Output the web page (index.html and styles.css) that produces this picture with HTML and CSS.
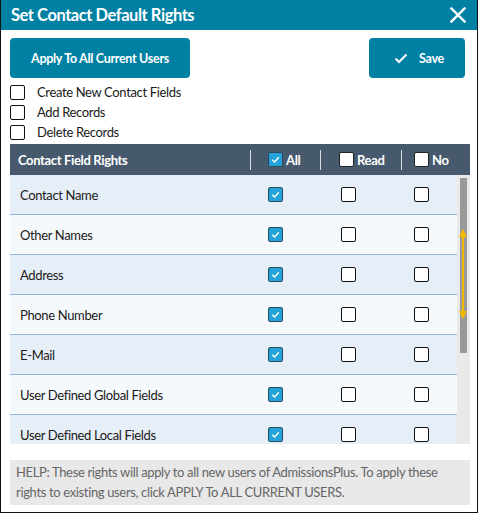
FILE: index.html
```html
<!DOCTYPE html>
<html>
<head>
<meta charset="utf-8">
<link rel="stylesheet" href="styles.css">
</head>
<body>
<div class="dialog">
  <div class="titlebar">
    <span class="title">Set Contact Default Rights</span>
    <svg class="close" width="16" height="16" viewBox="0 0 16 16"><path d="M1.5 1.5 L14.5 14.5 M14.5 1.5 L1.5 14.5" stroke="#fff" stroke-width="2.4" stroke-linecap="square"/></svg>
  </div>
  <div class="content">
    <div class="actions">
      <button class="btn apply">Apply To All Current Users</button>
      <button class="btn save"><svg width="14" height="11" viewBox="0 0 14 11"><path d="M1.5 5.5 L5 9 L12.5 1.5" stroke="#fff" stroke-width="2" fill="none"/></svg><span>Save</span></button>
    </div>
    <div class="opts">
      <label class="opt"><span class="cb"></span>Create New Contact Fields</label>
      <label class="opt"><span class="cb"></span>Add Records</label>
      <label class="opt"><span class="cb"></span>Delete Records</label>
    </div>
    <div class="table">
      <div class="thead">
        <div class="th name">Contact Field Rights</div>
        <div class="sep"></div>
        <div class="th col"><span class="cb checked"><svg viewBox="0 0 10 10"><path d="M2 5.2 L4.2 7.2 L8 3" stroke="#fff" stroke-width="1.3" fill="none"/></svg></span>All</div>
        <div class="sep"></div>
        <div class="th col"><span class="cb white"></span>Read</div>
        <div class="sep"></div>
        <div class="th col"><span class="cb white"></span>No</div>
      </div>
      <div class="tbody">
        <div class="rows">
          <div class="row"><div class="cell name">Contact Name</div><div class="cell c1"><span class="cb checked"><svg viewBox="0 0 10 10"><path d="M2 5.2 L4.2 7.2 L8 3" stroke="#fff" stroke-width="1.3" fill="none"/></svg></span></div><div class="cell c2"><span class="cb"></span></div><div class="cell c3"><span class="cb"></span></div></div>
          <div class="row"><div class="cell name">Other Names</div><div class="cell c1"><span class="cb checked"><svg viewBox="0 0 10 10"><path d="M2 5.2 L4.2 7.2 L8 3" stroke="#fff" stroke-width="1.3" fill="none"/></svg></span></div><div class="cell c2"><span class="cb"></span></div><div class="cell c3"><span class="cb"></span></div></div>
          <div class="row"><div class="cell name">Address</div><div class="cell c1"><span class="cb checked"><svg viewBox="0 0 10 10"><path d="M2 5.2 L4.2 7.2 L8 3" stroke="#fff" stroke-width="1.3" fill="none"/></svg></span></div><div class="cell c2"><span class="cb"></span></div><div class="cell c3"><span class="cb"></span></div></div>
          <div class="row"><div class="cell name">Phone Number</div><div class="cell c1"><span class="cb checked"><svg viewBox="0 0 10 10"><path d="M2 5.2 L4.2 7.2 L8 3" stroke="#fff" stroke-width="1.3" fill="none"/></svg></span></div><div class="cell c2"><span class="cb"></span></div><div class="cell c3"><span class="cb"></span></div></div>
          <div class="row"><div class="cell name">E-Mail</div><div class="cell c1"><span class="cb checked"><svg viewBox="0 0 10 10"><path d="M2 5.2 L4.2 7.2 L8 3" stroke="#fff" stroke-width="1.3" fill="none"/></svg></span></div><div class="cell c2"><span class="cb"></span></div><div class="cell c3"><span class="cb"></span></div></div>
          <div class="row"><div class="cell name">User Defined Global Fields</div><div class="cell c1"><span class="cb checked"><svg viewBox="0 0 10 10"><path d="M2 5.2 L4.2 7.2 L8 3" stroke="#fff" stroke-width="1.3" fill="none"/></svg></span></div><div class="cell c2"><span class="cb"></span></div><div class="cell c3"><span class="cb"></span></div></div>
          <div class="row"><div class="cell name">User Defined Local Fields</div><div class="cell c1"><span class="cb checked"><svg viewBox="0 0 10 10"><path d="M2 5.2 L4.2 7.2 L8 3" stroke="#fff" stroke-width="1.3" fill="none"/></svg></span></div><div class="cell c2"><span class="cb"></span></div><div class="cell c3"><span class="cb"></span></div></div>
        </div>
        <div class="scrollbar"><div class="thumb"></div></div>
        <svg class="arrow" width="10" height="94" viewBox="0 0 10 94"><path d="M5 3 V91" stroke="#f5b800" stroke-width="2"/><path d="M1 10 L5 2 L9 10 Z M1 84 L5 92 L9 84 Z" fill="#f5b800"/></svg>
      </div>
    </div>
    <div class="help">HELP: These rights will apply to all new users of AdmissionsPlus. To apply these rights to existing users, click APPLY To ALL CURRENT USERS.</div>
  </div>
</div>
</body>
</html>
```
FILE: styles.css
```css
* { box-sizing: border-box; }
html, body { margin: 0; padding: 0; background: #fff; }
body { font-family: Lato, "Liberation Sans", sans-serif; letter-spacing: -0.35px; }
.dialog {
  width: 478px;
  height: 513px;
  border: 1px solid #111;
  border-top: none;
  background: #fff;
}
.titlebar {
  height: 30px;
  background: #0080a3;
  display: flex;
  align-items: center;
  justify-content: space-between;
  padding: 0 11px 0 10px;
}
.title { color: #fff; font-weight: 700; font-size: 16.5px; letter-spacing: -0.45px; }
.close { display: block; }
.content { padding: 8px 9px 0 9px; }
.actions { display: flex; justify-content: space-between; }
.btn {
  height: 40px;
  border: none;
  border-radius: 4px;
  background: #0080a3;
  color: #fff;
  font-family: inherit;
  font-weight: 700;
  font-size: 12.5px;
  letter-spacing: -0.3px;
  display: flex;
  align-items: center;
  justify-content: center;
  padding: 0;
}
.apply { width: 180px; }
.save { width: 96px; margin-right: 3px; gap: 11px; padding-left: 4px; }
.opts { padding-top: 4px; }
.opt {
  display: flex;
  align-items: center;
  height: 20px;
  font-size: 13px;
  color: #1a1a1a;
}
.opt .cb { margin-right: 12px; }
.cb {
  width: 15px;
  height: 15px;
  border: 1.3px solid #111;
  border-radius: 2px;
  background: #fff;
  display: block;
  flex: none;
}
.cb.checked {
  background: #23a3d9;
  border-color: #2c4a5e;
  display: flex;
  align-items: center;
  justify-content: center;
}
.cb.checked svg { width: 11px; height: 11px; display: block; }
.table { margin-top: 2px; width: 460px; }
.thead {
  height: 31px;
  background: #475a6d;
  display: flex;
  align-items: center;
  color: #fff;
  font-weight: 700;
  font-size: 13px;
}
.th.name { width: 240px; padding-left: 8px; }
.sep { width: 1px; height: 20px; background: #d8dde3; }
.th.col { display: flex; align-items: center; gap: 3px; }
.thead > .th.col:nth-child(3) { width: 69px; padding-left: 17px; }
.thead > .th.col:nth-child(5) { width: 80px; padding-left: 18px; }
.thead > .th.col:nth-child(7) { padding-left: 12px; }
.thead .cb.white { border-color: #222; }
.tbody {
  position: relative;
  height: 269px;
  display: flex;
  overflow: hidden;
}
.rows { width: 447px; }
.row {
  height: 40px;
  display: flex;
  align-items: center;
  border-bottom: 1px solid #8fb5df;
  background: #e6eef7;
}
.row:nth-child(even) { background: #f5f9fc; }
.cell { display: flex; align-items: center; }
.cell.name { width: 258px; padding-left: 10px; font-size: 13px; color: #1a1a1a; }
.cell.c1 { width: 73px; }
.cell.c2 { width: 73px; }
.scrollbar {
  width: 13px;
  background: #e9e9e9;
  padding: 3px 3px 0 3px;
}
.thumb { width: 7px; height: 175px; background: #999; }
.arrow { position: absolute; left: 448px; top: 52px; }
.help {
  margin-top: 16px;
  width: 460px;
  background: #e8e8e8;
  color: #666;
  font-size: 13px;
  line-height: 20px;
  padding: 2px 6px 3px 6px;
}
```
